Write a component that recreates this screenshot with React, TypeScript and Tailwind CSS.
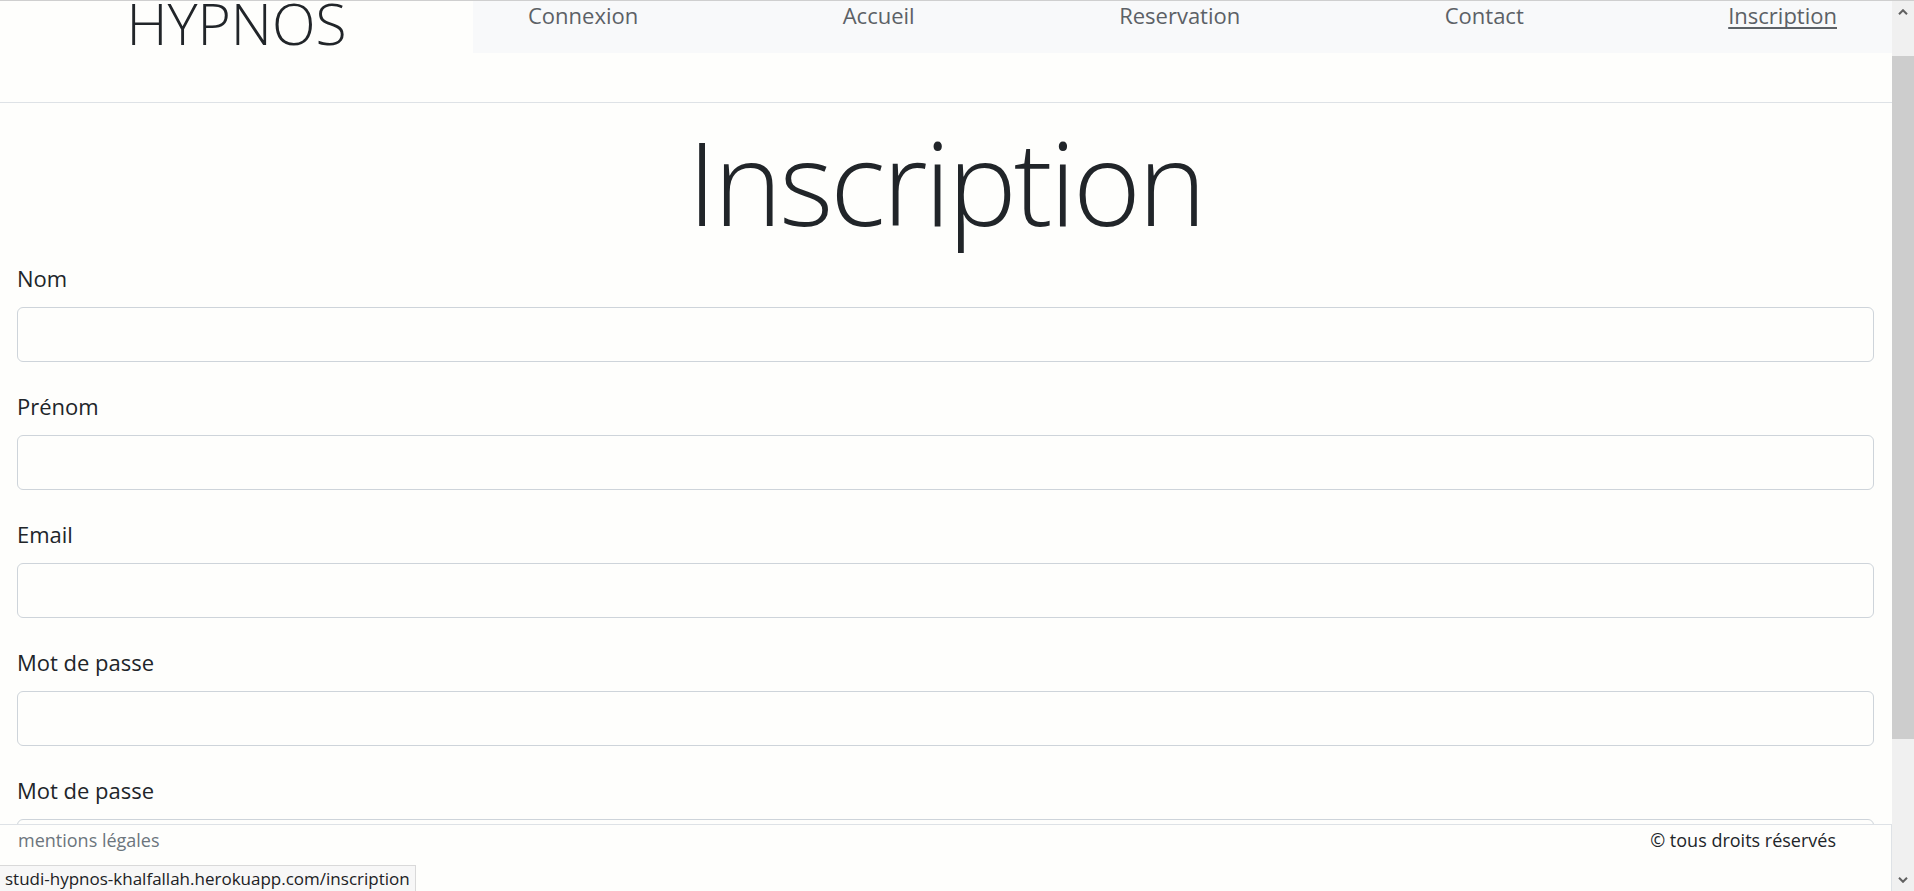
// Page d'inscription HYPNOS : en-tête, formulaire et pied de page fixe.
const links = ['Connexion', 'Accueil', 'Reservation', 'Contact', 'Inscription'];
const fields = ['Nom', 'Prénom', 'Email', 'Mot de passe', 'Mot de passe'];

function Chevron({ up }: { up?: boolean }) {
  return (
    <svg width="10" height="6" viewBox="0 0 10 6" aria-hidden>
      <path d={up ? 'M1 5.2 L5 1.2 L9 5.2' : 'M1 0.8 L5 4.8 L9 0.8'} fill="none" stroke="#606060" strokeWidth="2" />
    </svg>
  );
}

export default function App() {
  return (
    <div className="flex h-[891px] w-full overflow-hidden border-t border-[#cfcfcf] bg-[#fefefc] font-['Open_Sans',sans-serif] text-[#212529]">
      <div className="relative flex-1 overflow-hidden">
        <header className="h-[102px] border-b border-[#dee2e6]">
          <div className="flex h-[52px]">
            <div className="w-[473px] text-center text-[57px] font-light leading-[44px]">HYPNOS</div>
            <nav className="flex flex-1 items-start justify-between bg-[#f8f9fa] px-[55px]">
              {links.map((l) => (
                <a
                  key={l}
                  href="#"
                  className={
                    'text-[22px] leading-[28px] text-[#5c6166] ' +
                    (l === 'Inscription' ? 'underline underline-offset-[3px] [text-decoration-skip-ink:none]' : '')
                  }
                >
                  {l}
                </a>
              ))}
            </nav>
          </div>
        </header>

        <main className="pl-[17px] pr-[18px]">
          <h1 className="mt-[6px] text-center text-[116px] font-light leading-[144px] tracking-[-3px]">Inscription</h1>
          <form className="mt-[9px]">
            {fields.map((f, i) => (
              <div key={i} className="mb-[28px]">
                <label className="block text-[22px] leading-[33px]">{f}</label>
                <input
                  type={f === 'Mot de passe' ? 'password' : 'text'}
                  className="mt-[12px] block h-[55px] w-full rounded-[6px] border border-[#ced4da] bg-transparent"
                />
              </div>
            ))}
          </form>
        </main>

        <footer className="absolute bottom-0 left-0 right-0 flex h-[67px] items-start justify-between border-r border-t border-[#dee2e6] bg-[#fefefc] pl-[18px] pr-[55px] pt-[2px] text-[18px] leading-[27px]">
          <a href="#" className="text-[#6c757d]">mentions légales</a>
          <span>© tous droits réservés</span>
        </footer>

        <div className="absolute bottom-0 left-0 h-[26px] border-r border-t border-[#d9d9d9] bg-[#f7f7f7] px-[5px] text-[17px] leading-[25px] text-[#202124]">
          studi-hypnos-khalfallah.herokuapp.com/inscription
        </div>
      </div>

      <div className="flex w-[22px] flex-col bg-[#f0f0f0]">
        <div className="flex h-[22px] items-center justify-center">
          <Chevron up />
        </div>
        <div className="mt-[33px] h-[683px] bg-[#cdcdcd]" />
        <div className="flex-1" />
        <div className="flex h-[22px] items-center justify-center">
          <Chevron />
        </div>
      </div>
    </div>
  );
}
